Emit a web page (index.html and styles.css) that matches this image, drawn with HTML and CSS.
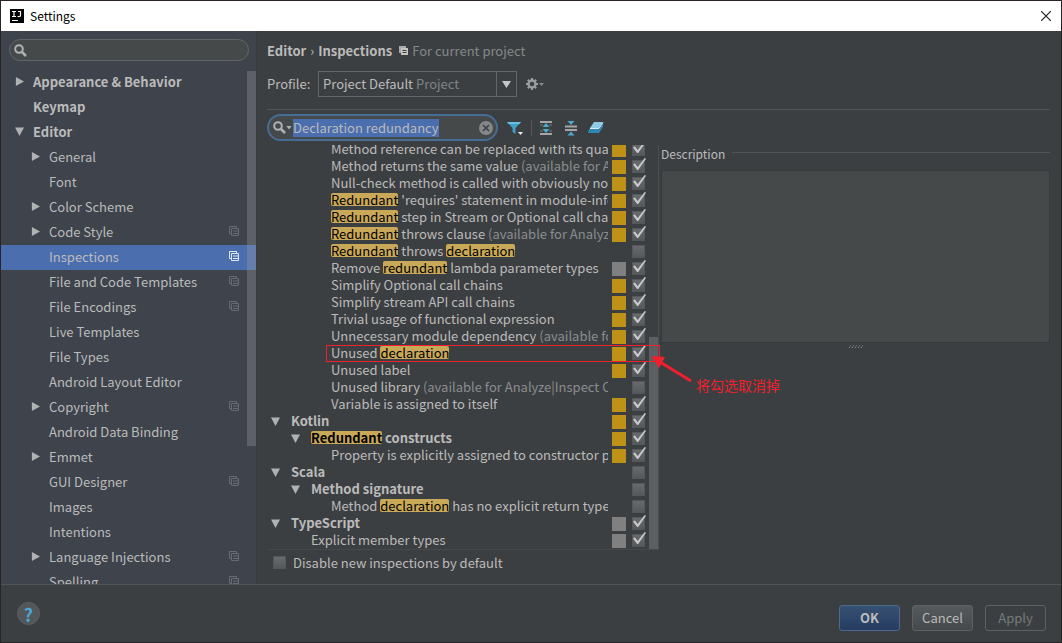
FILE: index.html
```html
<!DOCTYPE html>
<html lang="en">
<head>
    <meta charset="UTF-8">
    <meta name="viewport" content="width=device-width, initial-scale=1.0">
    <title>Settings</title>
    <link rel="stylesheet" href="styles.css">
</head>
<body>
    <!-- shared icons -->
    <svg width="0" height="0" class="defs">
        <symbol id="copy" viewBox="0 0 11 11">
            <path d="M2 7.5H.5v-7h7V2M2.500 2.500h7v7h-7zM4 5h5M4 7.500h5" fill="none" stroke="currentColor"/>
        </symbol>
        <symbol id="lens" viewBox="0 0 13 13">
            <circle cx="5" cy="5" r="3.800" fill="none" stroke="currentColor" stroke-width="2"/>
            <path d="M8 8l4 4" stroke="currentColor" stroke-width="2.500"/>
        </symbol>
    </svg>

    <div class="window">
        <header class="titlebar">
            <svg class="logo" viewBox="0 0 14 14"><path fill="#000" d="M0 0h14v14H0z"/><path d="M2 2.500h4M4 2.500v5M2 7.500h4M8 2.500h3M10.500 2.500v4q0 1-1.200 1H7.500" fill="none" stroke="#fff" stroke-width="1.200"/><path fill="#fff" d="M2 11h6v1H2z"/></svg>
            <h1>Settings</h1>
            <button class="close" aria-label="Close"><svg viewBox="0 0 10 10"><path d="M0 0l10 10M10 0L0 10" stroke="#222" stroke-width="1.200"/></svg></button>
        </header>

        <div class="content">
            <nav class="sidebar">
                <div class="side-search">
                    <svg class="lens"><use href="#lens"/></svg>
                    <input type="text" aria-label="Search settings">
                </div>
                <div class="side-scroll">
                    <ul class="side-tree">
                        <li class="top"><i class="arrow right"></i><a href="#">Appearance &amp; Behavior</a></li>
                        <li class="top"><i class="arrow"></i><a href="#">Keymap</a></li>
                        <li class="top"><i class="arrow down"></i><a href="#">Editor</a></li>
                        <li><i class="arrow right"></i><a href="#">General</a></li>
                        <li><i class="arrow"></i><a href="#">Font</a></li>
                        <li><i class="arrow right"></i><a href="#">Color Scheme</a></li>
                        <li><i class="arrow right"></i><a href="#">Code Style</a><svg class="copy"><use href="#copy"/></svg></li>
                        <li class="selected"><i class="arrow"></i><a href="#">Inspections</a><svg class="copy"><use href="#copy"/></svg></li>
                        <li><i class="arrow"></i><a href="#">File and Code Templates</a><svg class="copy"><use href="#copy"/></svg></li>
                        <li><i class="arrow"></i><a href="#">File Encodings</a><svg class="copy"><use href="#copy"/></svg></li>
                        <li><i class="arrow"></i><a href="#">Live Templates</a></li>
                        <li><i class="arrow"></i><a href="#">File Types</a></li>
                        <li><i class="arrow"></i><a href="#">Android Layout Editor</a></li>
                        <li><i class="arrow right"></i><a href="#">Copyright</a><svg class="copy"><use href="#copy"/></svg></li>
                        <li><i class="arrow"></i><a href="#">Android Data Binding</a></li>
                        <li><i class="arrow right"></i><a href="#">Emmet</a></li>
                        <li><i class="arrow"></i><a href="#">GUI Designer</a><svg class="copy"><use href="#copy"/></svg></li>
                        <li><i class="arrow"></i><a href="#">Images</a></li>
                        <li><i class="arrow"></i><a href="#">Intentions</a></li>
                        <li><i class="arrow right"></i><a href="#">Language Injections</a><svg class="copy"><use href="#copy"/></svg></li>
                        <li><i class="arrow"></i><a href="#">Spelling</a><svg class="copy"><use href="#copy"/></svg></li>
                    </ul>
                    <div class="side-thumb"></div>
                </div>
            </nav>

            <main class="main">
                <div class="breadcrumb">
                    <a href="#">Editor</a><span class="sep">›</span><a href="#">Inspections</a>
                    <svg class="scope-icon" viewBox="0 0 9 9"><path fill="#aaa" d="M0 0h7v2H2v5H0z"/><path fill="#c4c4c4" d="M2 2h7v7H2z"/><path d="M3.500 4.500h4M3.500 6.500h4" stroke="#3c3f41"/></svg>
                    <span class="scope">For current project</span>
                </div>

                <div class="profile">
                    <label for="profile">Profile:</label>
                    <div class="combo">
                        <select id="profile"><option>Project Default</option></select>
                        <span class="combo-note">Project</span>
                        <span class="combo-arrow"></span>
                    </div>
                    <button class="gear" aria-label="Profile actions">
                        <svg viewBox="0 0 20 14"><circle cx="7" cy="7" r="3.500" fill="none" stroke="#9a9da0" stroke-width="2.400"/><path d="M7 1v2M7 11v2M1 7h2M11 7h2M2.800 2.800l1.400 1.400M9.800 9.800l1.400 1.400M2.800 11.200l1.400-1.400M9.800 4.200l1.400-1.400" stroke="#9a9da0" stroke-width="2"/><path fill="#8a8d90" d="M14 6h5l-2.500 3z"/></svg>
                    </button>
                </div>

                <div class="toolbar">
                    <div class="filter">
                        <svg class="lens"><use href="#lens"/></svg>
                        <i class="lens-arrow"></i>
                        <input id="filter" type="text" value="Declaration redundancy" aria-label="Filter inspections" autofocus>
                        <button class="clear" aria-label="Clear"><svg viewBox="0 0 14 14"><circle cx="7" cy="7" r="7" fill="#85888a"/><path d="M4 4l6 6M10 4l-6 6" stroke="#3c3f41" stroke-width="1.600"/></svg></button>
                    </div>
                    <button aria-label="Filter"><svg viewBox="0 0 16 16"><path fill="#3f9fc4" d="M0 2h14L8.500 8v6l-3-2V8z"/><path fill="#68bfdf" d="M0 2h14l-1.500 2h-11z"/><path fill="#eee" d="M11 12h5l-2.500 3z"/></svg></button>
                    <i class="tool-sep"></i>
                    <button aria-label="Expand all"><svg viewBox="0 0 16 16"><path d="M2 2h12M2 14h12" stroke="#a3a6a8" stroke-width="2"/><path d="M2 5h3M11 5h3M2 11h3M11 11h3" stroke="#777"/><path fill="#4aa9d0" d="M8 3l3.500 4h-7zM8 13l3.500-4h-7z"/></svg></button>
                    <button aria-label="Collapse all"><svg viewBox="0 0 16 16"><path d="M2 6.500h12M2 10h12" stroke="#a3a6a8" stroke-width="2"/><path fill="#4aa9d0" d="M4.500 1h7L8 5zM4.500 15.500h7L8 11.500z"/></svg></button>
                    <button aria-label="Reset"><svg viewBox="0 0 16 16"><path fill="#8fcbe6" d="M6 2h9l-4 6H2z"/><path fill="#2f86b3" d="M1 9h10v4H0zM11 9l4-6v4l-4 6z"/><path d="M2 8.500h9l4-6" fill="none" stroke="#d9eef7"/></svg></button>
                </div>

                <div class="panels">
                    <section class="inspections">
                        <ul class="rows">
                            <li class="l3"><label><span class="name">Method reference can be replaced with its qualifier</span><i class="swatch warn"></i><input type="checkbox" checked></label></li>
                            <li class="l3"><label><span class="name">Method returns the same value <em>(available for Analyze|Inspect Code)</em></span><i class="swatch warn"></i><input type="checkbox" checked></label></li>
                            <li class="l3"><label><span class="name">Null-check method is called with obviously non-null argument</span><i class="swatch warn"></i><input type="checkbox" checked></label></li>
                            <li class="l3"><label><span class="name"><mark>Redundant</mark> 'requires' statement in module-info <em>(available for Analyze)</em></span><i class="swatch warn"></i><input type="checkbox" checked></label></li>
                            <li class="l3"><label><span class="name"><mark>Redundant</mark> step in Stream or Optional call chain</span><i class="swatch warn"></i><input type="checkbox" checked></label></li>
                            <li class="l3"><label><span class="name"><mark>Redundant</mark> throws clause <em>(available for Analyze|Inspect Code)</em></span><i class="swatch warn"></i><input type="checkbox" checked></label></li>
                            <li class="l3"><label><span class="name"><mark>Redundant</mark> throws <mark>declaration</mark></span><i class="swatch"></i><input type="checkbox"></label></li>
                            <li class="l3"><label><span class="name">Remove <mark>redundant</mark> lambda parameter types</span><i class="swatch info"></i><input type="checkbox" checked></label></li>
                            <li class="l3"><label><span class="name">Simplify Optional call chains</span><i class="swatch warn"></i><input type="checkbox" checked></label></li>
                            <li class="l3"><label><span class="name">Simplify stream API call chains</span><i class="swatch warn"></i><input type="checkbox" checked></label></li>
                            <li class="l3"><label><span class="name">Trivial usage of functional expression</span><i class="swatch warn"></i><input type="checkbox" checked></label></li>
                            <li class="l3"><label><span class="name">Unnecessary module dependency <em>(available for Analyze|Inspect Code)</em></span><i class="swatch warn"></i><input type="checkbox" checked></label></li>
                            <li class="l3"><label><span class="name">Unused <mark>declaration</mark></span><i class="swatch warn"></i><input type="checkbox" checked></label></li>
                            <li class="l3"><label><span class="name">Unused label</span><i class="swatch warn"></i><input type="checkbox" checked></label></li>
                            <li class="l3"><label><span class="name">Unused library <em>(available for Analyze|Inspect Code)</em></span><i class="swatch"></i><input type="checkbox"></label></li>
                            <li class="l3"><label><span class="name">Variable is assigned to itself</span><i class="swatch warn"></i><input type="checkbox" checked></label></li>
                            <li class="group"><i class="arrow down"></i><label><span class="name">Kotlin</span><i class="swatch warn"></i><input type="checkbox" checked></label></li>
                            <li class="group l2"><i class="arrow down"></i><label><span class="name"><mark>Redundant</mark> constructs</span><i class="swatch warn"></i><input type="checkbox" checked></label></li>
                            <li class="l3"><label><span class="name">Property is explicitly assigned to constructor parameter</span><i class="swatch warn"></i><input type="checkbox" checked></label></li>
                            <li class="group"><i class="arrow down"></i><label><span class="name">Scala</span><i class="swatch"></i><input type="checkbox"></label></li>
                            <li class="group l2"><i class="arrow down"></i><label><span class="name">Method signature</span><i class="swatch"></i><input type="checkbox"></label></li>
                            <li class="l3"><label><span class="name">Method <mark>declaration</mark> has no explicit return type</span><i class="swatch"></i><input type="checkbox"></label></li>
                            <li class="group"><i class="arrow down"></i><label><span class="name">TypeScript</span><i class="swatch info"></i><input type="checkbox" checked></label></li>
                            <li class="l2 leaf"><label><span class="name">Explicit member types</span><i class="swatch info"></i><input type="checkbox" checked></label></li>
                        </ul>
                        <div class="rows-thumb"></div>
                        <div class="callout-box"></div>
                        <div class="callout">
                            <svg viewBox="0 0 42 28"><path d="M40 26L9 7" stroke="#f0202c" stroke-width="3"/><path fill="#f0202c" d="M0 1l14 1-6 11z"/></svg>
                            <span>将勾选取消掉</span>
                        </div>
                    </section>

                    <section class="description">
                        <h2>Description</h2>
                        <div class="description-text"></div>
                        <div class="grip"><svg viewBox="0 0 14 5"><path d="M0 4l2-3M3 4l2-3M6 4l2-3M9 4l2-3M12 4l2-3" stroke="#a0a0a0" stroke-dasharray="1 1"/></svg></div>
                    </section>
                </div>

                <label class="disable-new"><input type="checkbox">Disable new inspections by default</label>
            </main>
        </div>

        <footer class="footer">
            <button class="help" aria-label="Help">?</button>
            <button class="btn primary">OK</button>
            <button class="btn">Cancel</button>
            <button class="btn" disabled>Apply</button>
        </footer>
    </div>

    <script>
        document.getElementById('filter').focus();
        document.getElementById('filter').select();
    </script>
</body>
</html>
```
FILE: styles.css
```css
* {
    box-sizing: border-box;
}
body {
    margin: 0;
    font-family: "Noto Sans CJK SC", sans-serif;
    font-size: 13px;
    line-height: 18px;
    color: #bbbbbb;
    background-color: #3c3f41;
}
ul {
    list-style: none;
    margin: 0;
    padding: 0;
}
a {
    color: inherit;
    text-decoration: none;
}
button {
    font-family: inherit;
    font-size: 13px;
    color: #bbbbbb;
    background: none;
    border: none;
    padding: 0;
}
svg {
    display: block;
    flex: none;
}
.defs {
    position: absolute;
}
.window {
    height: 100vh;
    display: flex;
    flex-direction: column;
    border: 1px solid #2b2426;
}

/* title bar */
.titlebar {
    display: flex;
    align-items: center;
    flex: none;
    height: 30px;
    padding: 0 10px 0 9px;
    gap: 6px;
    background-color: #ffffff;
    color: #000000;
}
.titlebar h1 {
    flex: 1;
    margin: 0;
    font-size: 12px;
    font-weight: normal;
}
.logo {
    width: 14px;
    height: 14px;
}
.close svg {
    width: 10px;
    height: 10px;
}

.content {
    flex: 1;
    min-height: 0;
    display: flex;
}

/* left tree */
.sidebar {
    width: 256px;
    flex: none;
    display: flex;
    flex-direction: column;
    background-color: #3e434c;
    border-right: 1px solid #36393d;
}
.side-search {
    display: flex;
    align-items: center;
    flex: none;
    height: 22px;
    margin: 8px 7px 9px 8px;
    padding: 0 4px;
    border: 1px solid #616669;
    border-radius: 11px;
    background-color: #45494a;
}
.lens {
    width: 13px;
    height: 13px;
    color: #afb1b3;
}
.side-search input {
    flex: 1;
    min-width: 0;
    background: none;
    border: none;
    outline: none;
    color: #bbbbbb;
}
.side-scroll {
    position: relative;
    flex: 1;
    min-height: 0;
    overflow: hidden;
}
.side-tree li {
    display: flex;
    align-items: center;
    height: 25px;
    padding: 0 16px 2px 30px;
}
.side-tree li.top {
    padding-left: 14px;
    font-weight: bold;
}
.side-tree a {
    flex: 1;
}
.side-tree li.selected {
    background-color: #4b6eaf;
}
.copy {
    width: 11px;
    height: 11px;
    color: #676c73;
}
.selected .copy {
    color: #e0e6f0;
}
.side-thumb {
    position: absolute;
    top: 1px;
    right: 0;
    width: 9px;
    height: 375px;
    background-color: rgba(166, 166, 166, 0.3);
}
.arrow {
    flex: none;
    width: 18px;
    height: 9px;
}
.arrow::before {
    content: "";
    display: block;
    width: 9px;
    height: 9px;
    background-color: #afb1b3;
    clip-path: polygon(0 0, 0 0, 0 0);
}
.arrow.right::before {
    clip-path: polygon(10% 0, 100% 50%, 10% 100%);
}
.arrow.down::before {
    clip-path: polygon(0 5%, 100% 5%, 50% 100%);
}

/* right side */
.main {
    flex: 1;
    min-width: 0;
    display: flex;
    flex-direction: column;
    padding: 10px 11px 9px 10px;
}
.breadcrumb {
    display: flex;
    align-items: center;
    height: 20px;
    padding-bottom: 1px;
    font-weight: bold;
}
.breadcrumb .sep {
    margin: 0 4px;
    font-weight: normal;
}
.scope-icon {
    width: 9px;
    height: 9px;
    margin: 0 4px 0 7px;
}
.scope {
    font-weight: normal;
    color: #84888a;
}
.profile {
    display: flex;
    align-items: center;
    padding: 10px 0 12px;
    border-bottom: 1px solid #515556;
}
.profile label {
    width: 51px;
}
.combo {
    position: relative;
    width: 199px;
    height: 26px;
}
.combo select {
    appearance: none;
    width: 100%;
    height: 100%;
    padding: 0 4px 2px;
    border: 1px solid #646769;
    border-radius: 0;
    background-color: #3c3f41;
    color: #bbbbbb;
    font-family: inherit;
    font-size: 13px;
}
.combo-note {
    position: absolute;
    left: 98px;
    top: 4px;
    color: #808385;
    pointer-events: none;
}
.combo-arrow {
    position: absolute;
    top: 1px;
    right: 1px;
    bottom: 1px;
    width: 20px;
    border-left: 1px solid #646769;
    pointer-events: none;
}
.combo-arrow::before {
    content: "";
    position: absolute;
    top: 9px;
    left: 5px;
    width: 9px;
    height: 7px;
    background-color: #c4c6c8;
    clip-path: polygon(0 0, 100% 0, 50% 100%);
}
.gear {
    margin-left: 8px;
}
.gear svg {
    width: 20px;
    height: 14px;
}
.toolbar {
    display: flex;
    align-items: center;
    height: 35px;
    gap: 9px;
}
.filter {
    display: flex;
    align-items: center;
    width: 231px;
    height: 27px;
    padding: 0 3px 0 4px;
    border: 2px solid #466d94;
    border-radius: 14px;
    background-color: #45494a;
}
.lens-arrow {
    width: 6px;
    height: 4px;
    background-color: #afb1b3;
    clip-path: polygon(0 0, 100% 0, 50% 100%);
}
.filter input {
    flex: 1;
    min-width: 0;
    height: 18px;
    padding: 0 1px;
    background: none;
    border: none;
    outline: none;
    color: #bbbbbb;
    font-family: inherit;
    font-size: 13px;
}
.filter input::selection {
    background-color: #4b6eaf;
    color: #bbbbbb;
}
.clear svg {
    width: 14px;
    height: 14px;
}
.toolbar > button svg {
    width: 16px;
    height: 16px;
}
.tool-sep {
    width: 1px;
    height: 16px;
    margin: 0 -3px 0 -1px;
    background-color: #55595b;
}
.panels {
    flex: 1;
    min-height: 0;
    display: flex;
    gap: 2px;
}

/* inspections list, scrolled to the end */
.inspections {
    position: relative;
    width: 392px;
    flex: none;
    border-right: 1px solid #4b4f51;
    border-bottom: 1px solid #46494b;
}
.rows {
    display: flex;
    flex-direction: column;
    justify-content: flex-end;
    height: 100%;
    overflow: hidden;
    padding-right: 13px;
}
.rows li {
    display: flex;
    align-items: center;
    flex: none;
    height: 17px;
    padding-left: 4px;
}
.rows li.l2 {
    padding-left: 24px;
}
.rows li.l3 {
    padding-left: 64px;
}
.rows li.leaf {
    padding-left: 44px;
}
.rows .arrow {
    width: 20px;
}
.rows label {
    flex: 1;
    min-width: 0;
    display: flex;
    align-items: center;
}
.rows .name {
    flex: 1;
    min-width: 0;
    height: 17px;
    line-height: 16px;
    overflow: hidden;
    white-space: nowrap;
}
.group .name {
    font-weight: bold;
}
.rows em {
    font-style: normal;
    color: #8a8d8f;
}
mark {
    background-color: #c9a957;
    color: #000000;
    border-radius: 2px;
    line-height: 13px;
    display: inline-block;
}
.swatch {
    width: 14px;
    height: 14px;
    margin: 0 6px 0 4px;
}
.swatch.warn {
    background-color: #be9117;
}
.swatch.info {
    background-color: #808080;
}
input[type="checkbox"] {
    appearance: none;
    flex: none;
    position: relative;
    width: 13px;
    height: 13px;
    margin: 0;
    border: 1px solid #55585a;
    background: linear-gradient(#686a6c, #56595b);
}
input[type="checkbox"]:checked::before {
    content: "";
    position: absolute;
    top: -3px;
    left: 0;
    width: 13px;
    height: 13px;
    background-color: #c8c8c8;
    clip-path: polygon(0 50%, 15% 42%, 36% 70%, 90% 0, 100% 6%, 40% 92%, 32% 92%);
}
.rows-thumb {
    position: absolute;
    right: 0;
    bottom: 0;
    width: 9px;
    height: 212px;
    background-color: #5c5f61;
}

/* red note over the list */
.callout-box {
    position: absolute;
    z-index: 1;
    left: 59px;
    right: -2px;
    bottom: 187px;
    height: 17px;
    border: 1px solid #f0202c;
}
.callout {
    position: absolute;
    z-index: 1;
    left: 384px;
    bottom: 154px;
    display: flex;
    align-items: flex-end;
    gap: 3px;
    color: #f0202c;
    font-size: 14px;
    line-height: 20px;
    white-space: nowrap;
}
.callout svg {
    width: 42px;
    height: 28px;
    margin-bottom: 12px;
}

.description {
    flex: 1;
    min-width: 0;
}
.description h2 {
    display: flex;
    align-items: center;
    gap: 7px;
    height: 18px;
    margin: 0 0 7px;
    font-size: 12px;
    font-weight: normal;
}
.description h2::after {
    content: "";
    flex: 1;
    height: 1px;
    margin-bottom: 3px;
    background-color: #515556;
}
.description-text {
    height: 173px;
    background-color: #45494a;
    border: 1px solid #383b3d;
}
.grip {
    display: flex;
    justify-content: center;
    padding-top: 1px;
}
.grip svg {
    width: 14px;
    height: 5px;
}
.disable-new {
    display: flex;
    align-items: center;
    gap: 7px;
    height: 25px;
    padding-left: 6px;
}

/* bottom buttons */
.footer {
    display: flex;
    align-items: center;
    flex: none;
    height: 58px;
    gap: 12px;
    padding: 8px 15px 0 16px;
    border-top: 1px solid #515556;
}
.help {
    width: 23px;
    height: 23px;
    margin: 0 auto 8px 0;
    border: 1px solid #5c6063;
    border-radius: 50%;
    background-color: #53575a;
    color: #4ba6d4;
    font-size: 18px;
    font-weight: bold;
    line-height: 20px;
}
.btn {
    width: 61px;
    height: 26px;
    border: 1px solid #5e6162;
    border-radius: 3px;
    background: linear-gradient(#555a5c, #45494b);
}
.btn.primary {
    border-color: #4c6a8c;
    background: linear-gradient(#375173, #253c60);
    font-weight: bold;
}
.btn:disabled {
    background: none;
    color: #777a7c;
}
```
